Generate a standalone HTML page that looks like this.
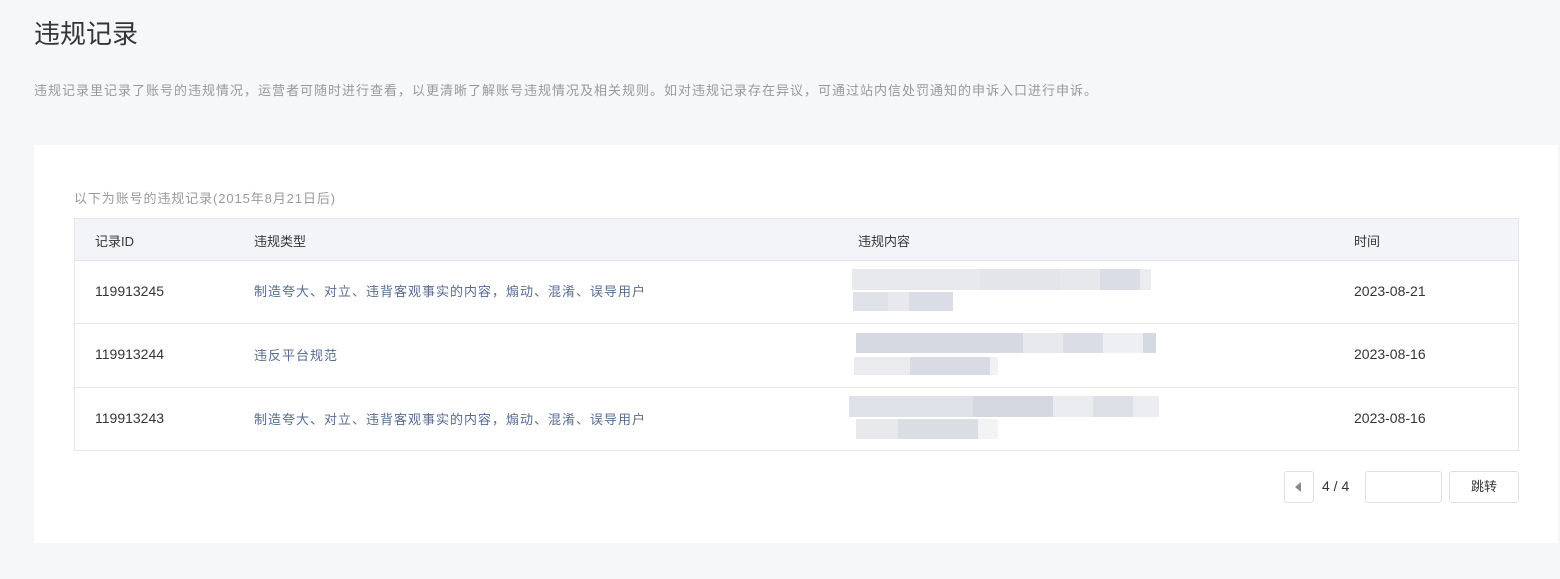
<!DOCTYPE html><html><head><meta charset="utf-8"><style>
body{margin:0;width:1560px;height:579px;background:#f6f7f9;font-family:"Liberation Sans","Noto Sans CJK SC",sans-serif;position:relative;overflow:hidden}
.a{position:absolute}
h1{position:absolute;left:34px;top:14px;margin:0;font-size:26px;font-weight:normal;color:#353535}
.desc{left:34px;top:80px;font-size:13px;color:#999;letter-spacing:1px;white-space:nowrap}
.card{left:34px;top:145px;width:1524px;height:398px;background:#fff}
.sub{left:74px;top:188px;font-size:13px;color:#9a9a9a;letter-spacing:0.9px}
.tbl{left:74px;top:218px;width:1443px;height:231px;border:1px solid #e4e6eb}
.hd{left:0;top:0;width:1443px;height:41px;background:#f3f4f7;border-bottom:1px solid #e4e6eb}
.t{font-size:14px;color:#353535;white-space:nowrap}
.lnk{font-size:13px;color:#576b95;white-space:nowrap;letter-spacing:1px}
.line{left:0;width:1443px;height:1px;background:#e4e6eb}
.b{position:absolute;height:21px}
.btn{border:1px solid #e0e0e0;border-radius:3px;background:#fff;box-sizing:border-box}
</style></head><body>
<h1>违规记录</h1>
<div class="a desc">违规记录里记录了账号的违规情况，运营者可随时进行查看，以更清晰了解账号违规情况及相关规则。如对违规记录存在异议，可通过站内信处罚通知的申诉入口进行申诉。</div>
<div class="a card"></div>
<div class="a sub">以下为账号的违规记录(2015年8月21日后)</div>
<div class="a tbl">
<div class="a hd"></div>
<div class="a t" style="left:20px;top:12px;font-size:13px">记录ID</div>
<div class="a t" style="left:179px;top:12px;font-size:13px">违规类型</div>
<div class="a t" style="left:783px;top:12px;font-size:13px">违规内容</div>
<div class="a t" style="left:1279px;top:12px;font-size:13px">时间</div>
<div class="a line" style="top:104px"></div>
<div class="a line" style="top:168px"></div>
<div class="a t" style="left:20px;top:64px">119913245</div>
<div class="a lnk" style="left:179px;top:62px">制造夸大、对立、违背客观事实的内容，煽动、混淆、误导用户</div>
<div class="a t" style="left:1279px;top:64px">2023-08-21</div>
<div class="a t" style="left:20px;top:127px">119913244</div>
<div class="a lnk" style="left:179px;top:126px">违反平台规范</div>
<div class="a t" style="left:1279px;top:127px">2023-08-16</div>
<div class="a t" style="left:20px;top:191px">119913243</div>
<div class="a lnk" style="left:179px;top:190px">制造夸大、对立、违背客观事实的内容，煽动、混淆、误导用户</div>
<div class="a t" style="left:1279px;top:191px">2023-08-16</div>
</div>
<!-- blurred -->
<div class="b" style="left:852px;top:269px;width:128px;background:#e8e9ed"></div>
<div class="b" style="left:980px;top:269px;width:80px;background:#e3e5eb"></div>
<div class="b" style="left:1060px;top:269px;width:40px;background:#e7e8ec"></div>
<div class="b" style="left:1100px;top:269px;width:40px;background:#dadde5"></div>
<div class="b" style="left:1140px;top:269px;width:11px;background:#ebecef"></div>
<div class="b" style="left:853px;top:292px;width:35px;height:19px;background:#e0e2e9"></div>
<div class="b" style="left:888px;top:292px;width:21px;height:19px;background:#e8e9ed"></div>
<div class="b" style="left:909px;top:292px;width:44px;height:19px;background:#dadde5"></div>
<div class="b" style="left:856px;top:333px;width:167px;height:20px;background:#d6d9e1"></div>
<div class="b" style="left:1023px;top:333px;width:40px;height:20px;background:#e8e9ed"></div>
<div class="b" style="left:1063px;top:333px;width:40px;height:20px;background:#dadde5"></div>
<div class="b" style="left:1103px;top:333px;width:40px;height:20px;background:#eeeff2"></div>
<div class="b" style="left:1143px;top:333px;width:13px;height:20px;background:#d5d9e1"></div>
<div class="b" style="left:854px;top:357px;width:56px;height:18px;background:#eaebef"></div>
<div class="b" style="left:910px;top:357px;width:80px;height:18px;background:#d8dbe3"></div>
<div class="b" style="left:990px;top:357px;width:8px;height:18px;background:#f0f1f4"></div>
<div class="b" style="left:849px;top:396px;width:124px;background:#dfe1e8"></div>
<div class="b" style="left:973px;top:396px;width:80px;background:#d4d7e0"></div>
<div class="b" style="left:1053px;top:396px;width:40px;background:#ebecef"></div>
<div class="b" style="left:1093px;top:396px;width:40px;background:#dee0e7"></div>
<div class="b" style="left:1133px;top:396px;width:26px;background:#ecedf0"></div>
<div class="b" style="left:856px;top:419px;width:42px;height:20px;background:#e8e9ed"></div>
<div class="b" style="left:898px;top:419px;width:80px;height:20px;background:#dadde4"></div>
<div class="b" style="left:978px;top:419px;width:20px;height:20px;background:#f2f3f5"></div>
<!-- pager -->
<div class="a btn" style="left:1284px;top:471px;width:30px;height:32px"><div class="a" style="left:10px;top:10px;width:0;height:0;border-top:5px solid transparent;border-bottom:5px solid transparent;border-right:6px solid #888"></div></div>
<div class="a t" style="left:1322px;top:478px">4 / 4</div>
<div class="a btn" style="left:1365px;top:471px;width:77px;height:32px"></div>
<div class="a btn" style="left:1449px;top:471px;width:70px;height:32px;font-size:13px;color:#353535;text-align:center;line-height:30px">跳转</div>
</body></html>
